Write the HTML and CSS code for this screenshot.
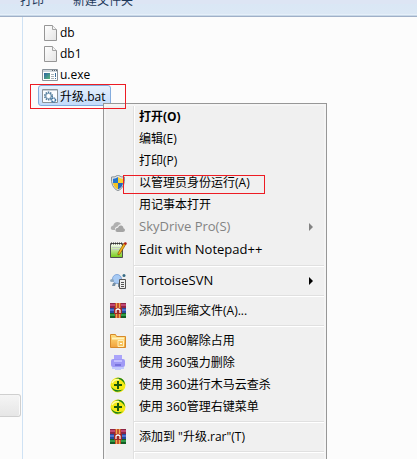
FILE: index.html
```html
<!DOCTYPE html>
<html lang="zh-CN">
<head>
    <meta charset="UTF-8">
    <meta name="viewport" content="width=device-width, initial-scale=1.0">
    <title>升级.bat</title>
    <link rel="stylesheet" href="styles.css">
</head>
<body>
    <!-- Shared icons -->
    <svg class="defs" width="0" height="0" aria-hidden="true">
        <defs>
            <linearGradient id="page" x2="1" y2="1"><stop offset="0" stop-color="#fff"/><stop offset="1" stop-color="#e4e4e4"/></linearGradient>
            <linearGradient id="folder" x2="0" y2="1"><stop offset="0" stop-color="#ffdf7c"/><stop offset="1" stop-color="#f2a23c"/></linearGradient>
            <linearGradient id="screen" x2="1" y2="1"><stop offset="0" stop-color="#2c62a4"/><stop offset="1" stop-color="#58b878"/></linearGradient>
            <linearGradient id="pad" x2="0" y2="1"><stop offset="0" stop-color="#fff"/><stop offset="1" stop-color="#76cb17"/></linearGradient>
        </defs>
        <symbol id="i-page" viewBox="0 0 16 16">
            <path d="M2.5.5h8l4 4v11h-12z" fill="url(#page)" stroke="#969696"/>
            <path d="M10.500.5v4h4" fill="#f4f4f4" stroke="#a5a5a5"/>
        </symbol>
        <symbol id="i-winrar" viewBox="0 0 16 16">
            <path d="M0 0h16v5H0z" fill="#8d2547"/><path d="M0 1h16v2H0z" fill="#bf4773"/>
            <path d="M0 5h16v5H0z" fill="#254a9c"/><path d="M0 6h16v2H0z" fill="#5272d0"/>
            <path d="M0 10h16v5H0z" fill="#145d26"/><path d="M0 11h16v2H0z" fill="#319c45"/>
            <path d="M5 0h6v15H5z" fill="#c9512d"/><path d="M6 0h1v15H6zM9 0h1v15H9z" fill="#efab51"/>
            <path d="M4 5h8v6H4z" fill="#9f2824"/>
            <path d="M6 10V7q2-2 4 0v3" fill="none" stroke="#fff" stroke-width="1.200"/>
        </symbol>
        <symbol id="i-360" viewBox="0 0 16 16">
            <circle cx="8" cy="8" r="7.500" fill="#f5ea16"/>
            <path d="M5 1.200Q11-.5 14 4l1.300 4Q12 1.500 5 1.200zM.8 9q4 6 12.200 3.500Q5 18.500.8 9z" fill="#16801d"/>
            <path d="M2 6Q4 2 9 2.500" fill="none" stroke="#fffda0" stroke-width="1.500"/>
            <path d="M8 4v8M4 8h8" stroke="#1c5a0c" stroke-width="2"/>
        </symbol>
    </svg>

    <div class="explorer">
        <header class="toolbar">
            <button type="button">打印</button>
            <button type="button">新建文件夹</button>
        </header>

        <div class="content">
            <nav class="sidebar">
                <button type="button" class="sidebar-btn" aria-label="导航"></button>
            </nav>

            <main class="pane">
                <ul class="files">
                    <li class="file">
                        <svg class="icon"><use href="#i-page"/></svg>
                        <span class="name">db</span>
                    </li>
                    <li class="file">
                        <svg class="icon"><use href="#i-page"/></svg>
                        <span class="name">db1</span>
                    </li>
                    <li class="file">
                        <svg class="icon" viewBox="0 0 16 16">
                            <path d="M.5 2.500h15v11H.5z" fill="#fff" stroke="#8a9299"/>
                            <path d="M1 3h14v2H1z" fill="#cfd6dc"/>
                            <path d="M10 3h1v1h-1zM12 3h1v1h-1zM14 3h1v1h-1z" fill="#59636b"/>
                            <path d="M2 6h6v6H2z" fill="url(#screen)"/>
                            <path d="M9 7.500h3M9 9.500h3M9 11.500h3" stroke="#a9b2b8"/>
                            <path d="M13.500 6v4M13.500 11v1" stroke="#3a6f9c"/>
                        </svg>
                        <span class="name">u.exe</span>
                    </li>
                    <li class="file selected">
                        <svg class="icon" viewBox="0 0 16 16">
                            <path d="M.5 1.500h15v13H.5z" fill="#fbfdff" stroke="#8a9299"/>
                            <path d="M1 2h14v1H1z" fill="#c6cfd8"/>
                            <circle cx="6.500" cy="8" r="3.500" fill="#cfe0ee" stroke="#4c7798" stroke-width="2" stroke-dasharray="1.400 .8"/>
                            <circle cx="6.500" cy="8" r="2.600" fill="#fff" stroke="#7c9db7"/>
                            <circle cx="11.500" cy="12" r="2" fill="#fff" stroke="#3f75a3" stroke-width="1.600" stroke-dasharray="1.300 .4"/>
                        </svg>
                        <span class="name">升级.bat</span>
                    </li>
                </ul>
            </main>
        </div>

        <!-- Context menu -->
        <div class="menu" role="menu">
            <button type="button" role="menuitem" class="item default">
                <span class="slot"></span>
                <span class="label">打开(O)</span>
            </button>
            <button type="button" role="menuitem" class="item">
                <span class="slot"></span>
                <span class="label">编辑(E)</span>
            </button>
            <button type="button" role="menuitem" class="item">
                <span class="slot"></span>
                <span class="label">打印(P)</span>
            </button>
            <button type="button" role="menuitem" class="item">
                <span class="slot">
                    <svg class="icon" viewBox="0 0 16 16">
                        <path d="M8 0Q11 2.500 14.500 2q1 10-6.500 14Q.5 12 1.500 2 5 2.500 8 0z" fill="#dfe3e6" stroke="#8b9298"/>
                        <path d="M8 2Q5.500 4 3 3.800V8h5z" fill="#2575cc"/>
                        <path d="M8 2q2.500 2 5 1.800V8H8z" fill="#fbd232"/>
                        <path d="M3 8h5v6.500Q3.500 12 3 8z" fill="#f5c321"/>
                        <path d="M8 8h5q-.5 4-5 6.500z" fill="#2467bb"/>
                    </svg>
                </span>
                <span class="label">以管理员身份运行(A)</span>
            </button>
            <button type="button" role="menuitem" class="item">
                <span class="slot"></span>
                <span class="label">用记事本打开</span>
            </button>
            <button type="button" role="menuitem" class="item latin" disabled>
                <span class="slot">
                    <svg class="icon" viewBox="0 0 16 16">
                        <path d="M3 11Q0 10.500 1 8q.6-1.500 2.300-1.500Q4 3 7.500 3q2.500 0 3.500 2-2.500 0-3.500 2.500Q4.500 8 5 11z" fill="#b0b0b0"/>
                        <path d="M7 13q-2-.3-1.500-2.500.5-1.500 2.500-1.700Q9 6 11.500 6.500q2 .5 2 2.700 1.700.3 1.500 2-.2 1.600-2 1.800z" fill="#a4a4a4"/>
                    </svg>
                </span>
                <span class="label">SkyDrive Pro(S)</span>
                <svg class="arrow" viewBox="0 0 4 8"><path d="M0 0l4 4-4 4z"/></svg>
            </button>
            <button type="button" role="menuitem" class="item latin tall">
                <span class="slot">
                    <svg class="icon-lg" viewBox="0 0 18 18">
                        <path d="M1.500 2.500h12v14h-12z" fill="url(#pad)" stroke="#505050"/>
                        <path d="M2 2.500h12" stroke="#333" stroke-width="2" stroke-dasharray="1 1"/>
                        <path d="M3 6.500h8M3 8.500h7" stroke="#c2ccc2"/>
                        <path d="M9 12L15 2l2 1-6 10-2 1z" fill="#f4b21c" stroke="#704400" stroke-width=".6"/>
                        <path d="M14.500 3L16 1l2 1-1 2z" fill="#b31f17"/>
                    </svg>
                </span>
                <span class="label">Edit with Notepad++</span>
            </button>
            <hr>
            <button type="button" role="menuitem" class="item latin">
                <span class="slot">
                    <svg class="icon" viewBox="0 0 16 16">
                        <circle cx="7" cy="6" r="4.500" fill="#a7caf4" stroke="#84a9db"/>
                        <ellipse cx="2" cy="7.500" rx="2" ry="1.500" fill="#8ba6bd"/>
                        <path d="M3 10l-1 3h3l1-3zM8 10v4h2v-4z" fill="#7890a5"/>
                        <circle cx="14" cy="2.500" r="1.500" fill="#376b84"/>
                        <path d="M9.500 6.500h6v9h-6z" fill="#eee" stroke="#555"/>
                        <path d="M11 9.500h3M11 11.500h3M11 13.500h3" stroke="#555"/>
                    </svg>
                </span>
                <span class="label">TortoiseSVN</span>
                <svg class="arrow" viewBox="0 0 4 8"><path d="M0 0l4 4-4 4z"/></svg>
            </button>
            <hr>
            <button type="button" role="menuitem" class="item">
                <span class="slot"><svg class="icon"><use href="#i-winrar"/></svg></span>
                <span class="label">添加到压缩文件(A)...</span>
            </button>
            <hr>
            <button type="button" role="menuitem" class="item">
                <span class="slot">
                    <svg class="icon" viewBox="0 0 16 16">
                        <path d="M.5 14.500v-13h5l1 2h9v11z" fill="url(#folder)" stroke="#d78a2b"/>
                        <path d="M2 5.500h12" stroke="#fff3bd" stroke-width="2"/>
                        <path d="M8 7.500h5.500v6H8z" fill="#f8c35b" stroke="#fff0bb"/>
                        <path d="M10 10.500h2" stroke="#fff"/>
                    </svg>
                </span>
                <span class="label">使用 360解除占用</span>
            </button>
            <button type="button" role="menuitem" class="item">
                <span class="slot">
                    <svg class="icon" viewBox="0 0 16 16">
                        <path d="M4 0h8v6H4z" fill="#aaa4fa"/>
                        <rect x="1" y="4" width="14" height="8" rx="2" fill="#a09af6"/>
                        <path d="M4 5h8v2H4z" fill="#c4c0ff"/>
                        <path d="M2 12h12v2H2zM5 14h6v1H5z" fill="#c2c9fc"/>
                        <path d="M5 9h6v2H5z" fill="#7974dc"/>
                    </svg>
                </span>
                <span class="label">使用 360强力删除</span>
            </button>
            <button type="button" role="menuitem" class="item">
                <span class="slot"><svg class="icon"><use href="#i-360"/></svg></span>
                <span class="label">使用 360进行木马云查杀</span>
            </button>
            <button type="button" role="menuitem" class="item">
                <span class="slot"><svg class="icon"><use href="#i-360"/></svg></span>
                <span class="label">使用 360管理右键菜单</span>
            </button>
            <hr>
            <button type="button" role="menuitem" class="item">
                <span class="slot"><svg class="icon"><use href="#i-winrar"/></svg></span>
                <span class="label">添加到 "升级.rar"(T)</span>
            </button>
            <hr>
        </div>

        <!-- Red highlight frames -->
        <div class="mark mark-file"></div>
        <div class="mark mark-admin"></div>
    </div>
</body>
</html>
```
FILE: styles.css
```css
* {
    box-sizing: border-box;
}
body {
    margin: 0;
    font-family: "Open Sans", "Noto Sans CJK SC", sans-serif;
    font-size: 12px;
    color: #000;
    background-color: #fcfcfc;
}
button {
    font: inherit;
    color: inherit;
    background: none;
    border: none;
    padding: 0;
}
.defs {
    position: absolute;
}
.explorer {
    position: relative;
    display: flex;
    flex-direction: column;
    height: 100vh;
    overflow: hidden;
}
.toolbar {
    display: flex;
    flex-shrink: 0;
    gap: 29px;
    height: 33px;
    margin-top: -16px;
    padding-left: 20px;
    padding-bottom: 2px;
    color: #1e395b;
    background: linear-gradient(#dde5f4 20px, #dae7f5 20px, #dce8f5 30px, #e6f0fa 30px, #e6f0fa 31px, #c8d8e8 31px, #c8d8e8 32px, #a0b0c8 32px);
}
.content {
    display: flex;
    flex: 1;
}
.sidebar {
    display: flex;
    flex-direction: column;
    justify-content: flex-end;
    width: 23px;
    padding-right: 1px;
    padding-bottom: 42px;
    border-right: 1px solid #cfe2f4;
}
.sidebar-btn {
    height: 23px;
    border: 1px solid #cfcfcf;
    border-left: none;
    border-radius: 0 3px 3px 0;
    background: linear-gradient(#f5f5f5, #e6e6e6);
    box-shadow: inset -1px 0 0 #fafafa;
}
.pane {
    flex: 1;
    padding: 5px 15px;
}
.files {
    display: flex;
    flex-direction: column;
    align-items: flex-start;
    margin: 0;
    padding: 0;
    list-style: none;
}
.file {
    display: flex;
    align-items: center;
    gap: 2px;
    height: 21px;
    padding: 0 5px 0 3px;
    border: 1px solid transparent;
    border-radius: 3px;
}
.file.selected {
    border-color: #84acdd;
    background: linear-gradient(#e6f0fc, #c3dcfb);
}
.icon {
    width: 16px;
    height: 16px;
}
.icon-lg {
    width: 18px;
    height: 18px;
}
.menu {
    position: absolute;
    top: 103px;
    left: 103px;
    width: 224px;
    padding: 2px 2px 12px;
    border: 1px solid #979797;
    background: linear-gradient(90deg, #f0f0f0 29px, #e0e0e0 29px, #e0e0e0 30px, #fff 30px, #fff 31px, #f0f0f0 31px);
    box-shadow: inset 0 0 0 2px #f5f5f5;
}
.item {
    display: flex;
    align-items: center;
    width: 100%;
    height: 22px;
    padding-right: 11px;
    text-align: left;
    white-space: nowrap;
}
.item:disabled {
    color: #838383;
}
.item.default {
    font-weight: bold;
}
.item.latin {
    font-size: 13px;
}
.item.tall {
    height: 24px;
}
.slot {
    display: flex;
    justify-content: center;
    width: 23px;
    margin-right: 10px;
}
.label {
    flex: 1;
    padding-bottom: 2px;
}
.arrow {
    width: 4px;
    height: 8px;
    fill: currentColor;
}
.menu hr {
    height: 2px;
    margin: 3px 0 3px 28px;
    border: none;
    border-top: 1px solid #e0e0e0;
    background-color: #fff;
}
.mark {
    position: absolute;
    border: 1px solid #ed1c24;
    pointer-events: none;
}
.mark-file {
    top: 84px;
    left: 30px;
    width: 96px;
    height: 25px;
}
.mark-admin {
    top: 175px;
    left: 123px;
    width: 142px;
    height: 19px;
}
```
